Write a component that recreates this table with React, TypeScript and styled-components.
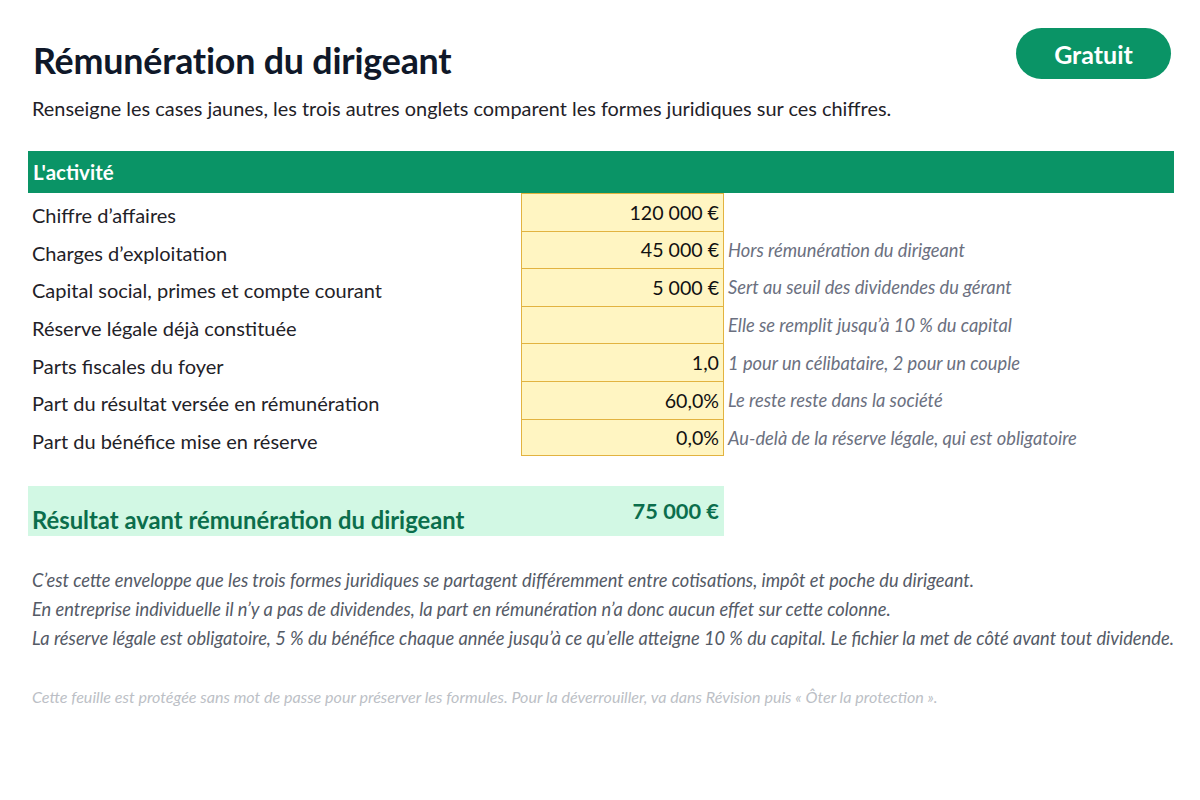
import React from "react";
import styled, { createGlobalStyle } from "styled-components";

const Global = createGlobalStyle`
  html, body { margin: 0; padding: 0; background: #ffffff; }
  body { font-family: Lato, "Open Sans", sans-serif; color: #1f2228; }
`;

const Page = styled.div`
  width: 1200px;
  height: 800px;
  box-sizing: border-box;
  padding: 28px 26px 0 28px;
  overflow: hidden;
`;

const Header = styled.header`
  display: flex;
  justify-content: space-between;
  align-items: flex-start;
`;

const Title = styled.h1`
  margin: 13px 0 0 5px;
  font-size: 35.8px;
  font-weight: 700;
  color: #0f1829;
  letter-spacing: -0.2px;
  line-height: 40px;
`;

const Badge = styled.div`
  width: 155px;
  height: 51px;
  border-radius: 26px;
  background: #0a9466;
  color: #ffffff;
  font-weight: 700;
  font-size: 25px;
  display: flex;
  align-items: center;
  justify-content: center;
  margin-right: 3px;
`;

const Subtitle = styled.p`
  margin: 14px 0 0 4px;
  font-size: 19.9px;
  line-height: 26px;
  color: #1f2228;
`;

const SectionBar = styled.div`
  margin-top: 30px;
  height: 42px;
  background: #0a9466;
  color: #ffffff;
  font-weight: 700;
  font-size: 20.5px;
  display: flex;
  align-items: center;
  padding-left: 5px;
`;

const Grid = styled.div`
  display: grid;
  grid-template-columns: 493px 203px 1fr;
  grid-auto-rows: 37.6px;
`;

const Label = styled.div`
  display: flex;
  align-items: center;
  padding: 7px 0 0 4px;
  font-size: 20px;
  color: #1f2228;
`;

const Cell = styled.div<{ $last?: boolean }>`
  background: #fff5c2;
  border: 1px solid #e2b340;
  border-bottom: ${(p) => (p.$last ? "1px solid #e2b340" : "none")};
  display: flex;
  align-items: center;
  justify-content: flex-end;
  padding-right: 4px;
  font-size: 19.6px;
  color: #111;
`;

const Note = styled.div`
  display: flex;
  align-items: center;
  padding: 1px 0 0 4px;
  font-size: 18.3px;
  font-style: italic;
  color: #6b7080;
  white-space: nowrap;
`;

const Result = styled.div`
  margin-top: 30px;
  width: 696px;
  height: 50px;
  background: #d2f8e4;
  display: flex;
  justify-content: space-between;
  box-sizing: border-box;
  padding: 0 5px 0 4px;
  color: #0b6e4c;
  font-weight: 700;
`;

const ResultLabel = styled.div`
  font-size: 23.8px;
  align-self: flex-end;
  padding-bottom: 2px;
`;

const ResultValue = styled.div`
  font-size: 21.8px;
  padding-top: 11px;
`;

const Notes = styled.div`
  margin-top: 30px;
  display: flex;
  flex-direction: column;
  padding-left: 4px;
`;

const NoteLine = styled.div`
  font-size: 18.25px;
  line-height: 29px;
  font-style: italic;
  color: #545a66;
  white-space: nowrap;
`;

const Footer = styled.div`
  margin-top: 34px;
  padding-left: 4px;
  font-size: 16.1px;
  line-height: 20px;
  font-style: italic;
  color: #bcbfc6;
  white-space: nowrap;
`;

const rows: { label: string; value: string; note: string }[] = [
  { label: "Chiffre d’affaires", value: "120 000 €", note: "" },
  { label: "Charges d’exploitation", value: "45 000 €", note: "Hors rémunération du dirigeant" },
  { label: "Capital social, primes et compte courant", value: "5 000 €", note: "Sert au seuil des dividendes du gérant" },
  { label: "Réserve légale déjà constituée", value: "", note: "Elle se remplit jusqu’à 10 % du capital" },
  { label: "Parts fiscales du foyer", value: "1,0", note: "1 pour un célibataire, 2 pour un couple" },
  { label: "Part du résultat versée en rémunération", value: "60,0%", note: "Le reste reste dans la société" },
  { label: "Part du bénéfice mise en réserve", value: "0,0%", note: "Au-delà de la réserve légale, qui est obligatoire" },
];

export default function App() {
  return (
    <>
      <Global />
      <Page>
        <Header>
          <div>
            <Title>Rémunération du dirigeant</Title>
            <Subtitle>
              Renseigne les cases jaunes, les trois autres onglets comparent les formes juridiques sur ces chiffres.
            </Subtitle>
          </div>
          <Badge>Gratuit</Badge>
        </Header>
        <SectionBar>L'activité</SectionBar>
        <Grid>
          {rows.map((r, i) => (
            <React.Fragment key={r.label}>
              <Label>{r.label}</Label>
              <Cell $last={i === rows.length - 1}>{r.value}</Cell>
              <Note>{r.note}</Note>
            </React.Fragment>
          ))}
        </Grid>
        <Result>
          <ResultLabel>Résultat avant rémunération du dirigeant</ResultLabel>
          <ResultValue>75 000 €</ResultValue>
        </Result>
        <Notes>
          <NoteLine>
            C’est cette enveloppe que les trois formes juridiques se partagent différemment entre cotisations, impôt et poche du dirigeant.
          </NoteLine>
          <NoteLine>
            En entreprise individuelle il n’y a pas de dividendes, la part en rémunération n’a donc aucun effet sur cette colonne.
          </NoteLine>
          <NoteLine>
            La réserve légale est obligatoire, 5 % du bénéfice chaque année jusqu’à ce qu’elle atteigne 10 % du capital. Le fichier la met de côté avant tout dividende.
          </NoteLine>
        </Notes>
        <Footer>
          Cette feuille est protégée sans mot de passe pour préserver les formules. Pour la déverrouiller, va dans Révision puis « Ôter la protection ».
        </Footer>
      </Page>
    </>
  );
}
